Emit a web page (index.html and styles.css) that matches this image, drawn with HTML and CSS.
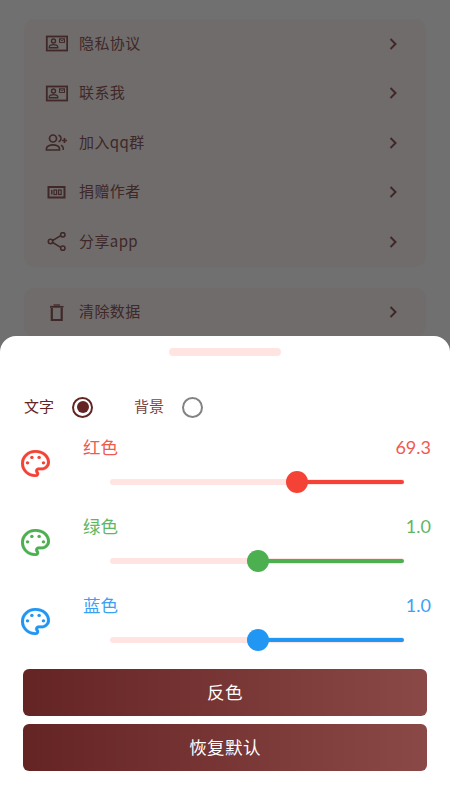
FILE: index.html
```html
<!DOCTYPE html>
<html lang="zh">
<head>
<meta charset="utf-8">
<title>设置</title>
<link rel="stylesheet" href="styles.css">
</head>
<body>
<svg class="defs" width="0" height="0" aria-hidden="true">
  <defs>
    <symbol id="chev" viewBox="0 0 10 14"><path d="M2.5 2l5 5-5 5" fill="none" stroke="currentColor" stroke-width="2"/></symbol>
    <symbol id="contact" viewBox="0 0 23 17">
      <rect x="1.8" y="1.5" width="20.4" height="14" fill="none" stroke="currentColor" stroke-width="1.8"/>
      <circle cx="8.5" cy="6" r="2" fill="none" stroke="currentColor" stroke-width="1.4"/>
      <path d="M4.3 12.8v-1c0-1.4 2.5-2.2 4.2-2.2s4.2.8 4.2 2.2v1z" fill="none" stroke="currentColor" stroke-width="1.4"/>
      <rect x="14.5" y="3.8" width="5" height="3.6" fill="none" stroke="currentColor" stroke-width="1"/>
      <path d="M14.7 4.2l2.3 1.6 2.3-1.6" fill="none" stroke="currentColor" stroke-width=".8"/>
    </symbol>
    <symbol id="palette" viewBox="2 2 20 20" preserveAspectRatio="none">
      <path fill="currentColor" stroke="currentColor" stroke-width=".15" d="M12 22C6.49 22 2 17.51 2 12S6.49 2 12 2s10 4.04 10 9c0 3.31-2.69 6-6 6h-1.77c-.28 0-.5.22-.5.5 0 .12.05.23.13.33.41.47.64 1.06.64 1.67 0 1.38-1.12 2.5-2.5 2.5zm0-18c-4.41 0-8 3.59-8 8s3.59 8 8 8c.28 0 .5-.22.5-.5 0-.16-.08-.28-.14-.35-.41-.46-.63-1.05-.63-1.65 0-1.38 1.12-2.5 2.5-2.5H16c2.21 0 4-1.79 4-4 0-3.86-3.59-7-8-7z"/>
      <circle fill="currentColor" cx="6.5" cy="11.5" r="1.2"/>
      <circle fill="currentColor" cx="9.5" cy="7.5" r="1.2"/>
      <circle fill="currentColor" cx="14.5" cy="7.5" r="1.2"/>
      <circle fill="currentColor" cx="17.5" cy="11.5" r="1.2"/>
    </symbol>
  </defs>
</svg>

<div class="page">
  <section class="card">
    <div class="row">
      <span class="row-icon"><svg class="i-contact"><use href="#contact"/></svg></span>
      <span class="row-label">隐私协议</span>
      <svg class="chev"><use href="#chev"/></svg>
    </div>
    <div class="row">
      <span class="row-icon"><svg class="i-contact"><use href="#contact"/></svg></span>
      <span class="row-label">联系我</span>
      <svg class="chev"><use href="#chev"/></svg>
    </div>
    <div class="row">
      <span class="row-icon"><svg class="i-sm" viewBox="0 0 23 19"><circle cx="8" cy="5.5" r="3.5" fill="none" stroke="currentColor" stroke-width="1.7"/><path d="M1.5 17v-1.500c0-2.400 3.700-3.700 6.500-3.700s6.500 1.300 6.500 3.700V17z" fill="none" stroke="currentColor" stroke-width="1.7"/><path d="M13.500 2.300a3.300 3.300 0 0 1 0 6.400M16 12.300c1.500.6 2.300 1.700 2.300 3.200V17" fill="none" stroke="currentColor" stroke-width="1.5"/><path d="M19.500 5v5M17 7.500h5" fill="none" stroke="currentColor" stroke-width="1.7"/></svg></span>
      <span class="row-label">加入qq群</span>
      <svg class="chev"><use href="#chev"/></svg>
    </div>
    <div class="row">
      <span class="row-icon"><svg class="i-sm" viewBox="0 0 23 19"><rect x="3.5" y="4" width="16" height="10.5" fill="none" stroke="currentColor" stroke-width="2"/><path d="M6.800 7v4.500" stroke="currentColor" stroke-width="1.4"/><rect x="9" y="7" width="2.6" height="4.5" fill="none" stroke="currentColor" stroke-width="1.2"/><rect x="13.6" y="7" width="2.6" height="4.5" fill="none" stroke="currentColor" stroke-width="1.2"/></svg></span>
      <span class="row-label">捐赠作者</span>
      <svg class="chev"><use href="#chev"/></svg>
    </div>
    <div class="row">
      <span class="row-icon"><svg class="i-sm" viewBox="0 0 23 19"><path d="M6 9.500L17 2.800M6 9.500l11 6.700" stroke="currentColor" stroke-width="1.5"/><circle cx="5.5" cy="9.5" r="2.2" fill="#fff6f4" stroke="currentColor" stroke-width="1.6"/><circle cx="17.8" cy="2.8" r="2.2" fill="#fff6f4" stroke="currentColor" stroke-width="1.6"/><circle cx="17.8" cy="16.2" r="2.2" fill="#fff6f4" stroke="currentColor" stroke-width="1.6"/></svg></span>
      <span class="row-label">分享app</span>
      <svg class="chev"><use href="#chev"/></svg>
    </div>
  </section>
  <section class="card">
    <div class="row">
      <span class="row-icon"><svg class="i-sm" viewBox="0 0 23 19"><path d="M6.800 5v12h9.900V5" fill="none" stroke="currentColor" stroke-width="2.2"/><path d="M5 3.800h13.500" stroke="currentColor" stroke-width="1.8"/><path d="M8.500 2h6.500" stroke="currentColor" stroke-width="1.3"/></svg></span>
      <span class="row-label">清除数据</span>
      <svg class="chev"><use href="#chev"/></svg>
    </div>
  </section>
</div>

<div class="scrim"></div>

<aside class="sheet">
  <div class="handle"></div>
  <div class="target">
    <span class="target-label">文字</span>
    <span class="radio radio-on"></span>
    <span class="target-label target-second">背景</span>
    <span class="radio"></span>
  </div>

  <div class="colors">
    <div class="color red">
      <svg class="palette"><use href="#palette"/></svg>
      <div class="color-body">
        <div class="color-head"><span class="name">红色</span><span class="value">69.3</span></div>
        <div class="slider">
          <div class="track-off"></div>
          <div class="track-on" style="left:63.6%"></div>
          <div class="thumb" style="left:63.6%"></div>
        </div>
      </div>
    </div>
    <div class="color green">
      <svg class="palette"><use href="#palette"/></svg>
      <div class="color-body">
        <div class="color-head"><span class="name">绿色</span><span class="value">1.0</span></div>
        <div class="slider">
          <div class="track-off"></div>
          <div class="track-on" style="left:50.3%"></div>
          <div class="thumb" style="left:50.3%"></div>
        </div>
      </div>
    </div>
    <div class="color blue">
      <svg class="palette"><use href="#palette"/></svg>
      <div class="color-body">
        <div class="color-head"><span class="name">蓝色</span><span class="value">1.0</span></div>
        <div class="slider">
          <div class="track-off"></div>
          <div class="track-on" style="left:50.3%"></div>
          <div class="thumb" style="left:50.3%"></div>
        </div>
      </div>
    </div>
  </div>

  <div class="actions">
    <button class="btn" type="button">反色</button>
    <button class="btn" type="button">恢复默认</button>
  </div>
</aside>
</body>
</html>
```

FILE: styles.css
```css
* { box-sizing: border-box; }
html, body { margin: 0; height: 100%; }
body {
  position: relative;
  width: 450px;
  height: 800px;
  overflow: hidden;
  background: #fff;
  font-family: "Noto Sans CJK SC", "Noto Sans", sans-serif;
}
.defs { position: absolute; }

.page {
  height: 800px;
  padding: 19px 24px 0;
  display: flex;
  flex-direction: column;
  gap: 21px;
  color: #8f5c5a;
}
.card {
  background: #fff6f4;
  border-radius: 10px;
}
.row {
  height: 49.5px;
  display: flex;
  align-items: center;
  padding: 0 28px 0 21px;
}
.row-icon {
  width: 34px;
  display: flex;
  align-items: center;
}
.i-contact { width: 23px; height: 17px; }
.i-sm { width: 23px; height: 19px; }
.row-label {
  flex: 1;
  font-size: 15px;
  line-height: 20px;
  padding-bottom: 2px;
  letter-spacing: .4px;
}
.chev { width: 10px; height: 14px; }

.scrim {
  position: absolute;
  inset: 0;
  background: rgba(0, 0, 0, .56);
}

.sheet {
  position: absolute;
  left: 0;
  right: 0;
  bottom: 0;
  height: 464px;
  background: #fff;
  border-radius: 16px 16px 0 0;
  padding-top: 12px;
}
.handle {
  width: 112px;
  height: 8px;
  margin: 0 auto;
  border-radius: 4px;
  background: #ffe4e1;
}
.target {
  display: flex;
  align-items: center;
  height: 24px;
  margin-top: 39px;
  padding-left: 24px;
}
.target-label {
  width: 48px;
  font-size: 15px;
  line-height: 20px;
  padding-bottom: 2px;
  color: #652424;
}
.target-second {
  margin-left: 41px;
  color: #7a4543;
}
.radio {
  width: 21px;
  height: 21px;
  border: 2.5px solid #828282;
  border-radius: 50%;
  flex: none;
}
.radio-on {
  border-color: #652424;
  position: relative;
}
.radio-on::after {
  content: "";
  position: absolute;
  inset: 2.5px;
  border-radius: 50%;
  background: #652424;
}

.colors {
  margin-top: 16px;
  display: flex;
  flex-direction: column;
  gap: 9px;
}
.color {
  height: 70px;
  display: flex;
  padding: 0 19px 0 21px;
}
.palette {
  width: 29px;
  height: 27px;
  margin-top: 15px;
  flex: none;
}
.color-body {
  flex: 1;
  margin-left: 33px;
}
.color-head {
  height: 24px;
  display: flex;
  justify-content: space-between;
  align-items: center;
  font-size: 17.5px;
}
.name { padding-bottom: 2px; }
.value { font-family: Lato, sans-serif; font-size: 18px; }
.slider {
  position: relative;
  width: 294px;
  height: 22px;
  margin: 12px 0 0 27px;
}
.track-off {
  position: absolute;
  left: 0;
  right: 0;
  top: 8px;
  height: 6px;
  border-radius: 3px;
  background: #ffe4e1;
}
.track-on {
  position: absolute;
  right: 0;
  top: 9px;
  height: 4px;
  border-radius: 2px;
  background: currentColor;
}
.thumb {
  position: absolute;
  top: 0;
  width: 22px;
  height: 22px;
  margin-left: -11px;
  border-radius: 50%;
  background: currentColor;
}
.red { color: #f44336; }
.green { color: #4caf50; }
.blue { color: #2196f3; }
.red .color-head { color: #ef5a4f; }
.green .color-head { color: #5fb663; }
.blue .color-head { color: #3ba1f4; }

.actions {
  margin: 6px 23px 0;
  display: flex;
  flex-direction: column;
  gap: 8px;
}
.btn {
  height: 47px;
  padding: 0 0 2px;
  border: 0;
  border-radius: 6px;
  background: linear-gradient(90deg, #652424, #8a4846);
  color: #fff;
  font-family: inherit;
  font-size: 17.5px;
  letter-spacing: .4px;
}
```
